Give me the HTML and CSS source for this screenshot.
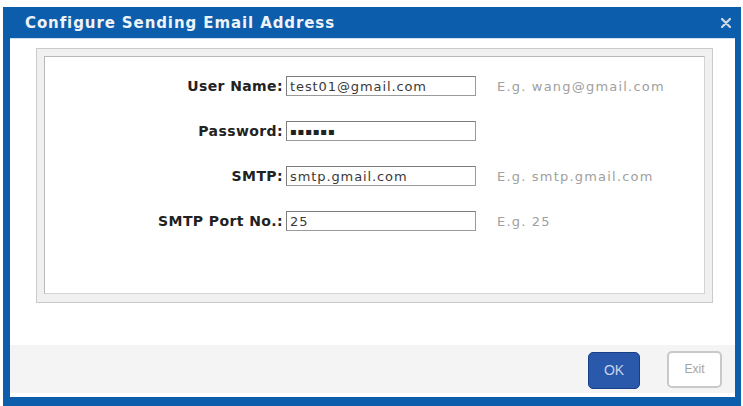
FILE: index.html
```html
<!DOCTYPE html>
<html lang="en">
<head>
    <meta charset="UTF-8">
    <title>Configure Sending Email Address</title>
    <link rel="stylesheet" href="styles.css">
</head>
<body>
    <div class="dialog">
        <div class="title-bar">
            <span class="title">Configure Sending Email Address</span>
            <span class="close">
                <svg width="10" height="10" viewBox="0 0 10 10">
                    <path d="M1 1 L9 9 M9 1 L1 9" stroke="#c9d6e4" stroke-width="2.4" stroke-linecap="round"/>
                </svg>
            </span>
        </div>

        <div class="dialog-body">
            <div class="panel">
                <div class="panel-inner">
                    <div class="form-grid">
                        <label class="field-label">User Name:</label>
                        <input class="field-input" type="text" value="test01@gmail.com">
                        <span class="hint">E.g. wang@gmail.com</span>

                        <label class="field-label">Password:</label>
                        <input class="field-input password" type="text" value="&#9642;&#9642;&#9642;&#9642;&#9642;&#9642;">
                        <span class="hint"></span>

                        <label class="field-label">SMTP:</label>
                        <input class="field-input" type="text" value="smtp.gmail.com">
                        <span class="hint">E.g. smtp.gmail.com</span>

                        <label class="field-label">SMTP Port No.:</label>
                        <input class="field-input" type="text" value="25">
                        <span class="hint">E.g. 25</span>
                    </div>
                </div>
            </div>

            <div class="footer">
                <button class="btn btn-ok">OK</button>
                <button class="btn btn-exit">Exit</button>
            </div>
        </div>
    </div>
</body>
</html>
```

FILE: styles.css
```css
body {
    margin: 0;
    padding: 0;
    background-color: #fff;
    font-family: "DejaVu Sans", Verdana, sans-serif;
}

.dialog {
    margin: 7px 2px 0 3px;
    width: 725px;
    padding: 0 6px 9px 7px;
    background-color: #0c5dab;
}

.title-bar {
    height: 31px;
    display: flex;
    align-items: center;
    justify-content: space-between;
    padding: 0 4px 0 15px;
}

.title {
    color: #eef3f9;
    font-size: 15px;
    font-weight: bold;
    letter-spacing: 0.9px;
    margin-top: 1px;
}

.close {
    display: flex;
    margin-top: 1px;
}

.dialog-body {
    background-color: #fff;
    border-top: 1px solid #cfe0f0;
    height: 358px;
    display: flex;
    flex-direction: column;
}

.panel {
    margin: 9px 22px 0 26px;
    height: 239px;
    border: 1px solid #cacaca;
    background-color: #f0f0f0;
    padding: 7px;
}

.panel-inner {
    height: 236px;
    border: 1px solid #b9b9b9;
    border-right-color: #d4d4d4;
    border-bottom-color: #d4d4d4;
    background-color: #fff;
}

.form-grid {
    display: grid;
    grid-template-columns: 238px 190px auto;
    grid-auto-rows: 20px;
    column-gap: 3px;
    row-gap: 25px;
    padding-top: 19px;
    align-items: center;
}

.field-label {
    text-align: right;
    font-size: 14px;
    font-weight: bold;
    letter-spacing: 0.4px;
    color: #222;
}

.field-input {
    box-sizing: border-box;
    width: 190px;
    height: 20px;
    margin: 0;
    padding: 0 3px;
    border: 1px solid #9a9a9a;
    border-top-color: #7c7c7c;
    border-left-color: #7c7c7c;
    font-family: "DejaVu Sans", Verdana, sans-serif;
    font-size: 13px;
    letter-spacing: 0.9px;
    color: #3a3a3a;
    outline: none;
}

.password {
    font-size: 10px;
    letter-spacing: 0.8px;
    color: #222;
}

.hint {
    margin-left: 18px;
    font-size: 13px;
    letter-spacing: 1.2px;
    color: #a0a0a0;
}

.footer {
    margin-top: auto;
    margin-bottom: 4px;
    height: 48px;
    background-color: #f5f4f4;
    display: flex;
    align-items: center;
    justify-content: flex-end;
    gap: 27px;
    padding-right: 13px;
}

.btn {
    box-sizing: border-box;
    height: 37px;
    border-radius: 5px;
    font-family: "Liberation Sans", Arial, sans-serif;
    font-size: 13px;
    cursor: pointer;
}

.btn-ok {
    width: 52px;
    margin-top: 2px;
    background-color: #2a58aa;
    border: 1px solid #1b3f86;
    color: #c7d3ea;
    font-size: 14px;
}

.btn-exit {
    width: 55px;
    background-color: #fff;
    border: 2px solid #c9c9c9;
    color: #a3a3a3;
    font-size: 12px;
}
```
